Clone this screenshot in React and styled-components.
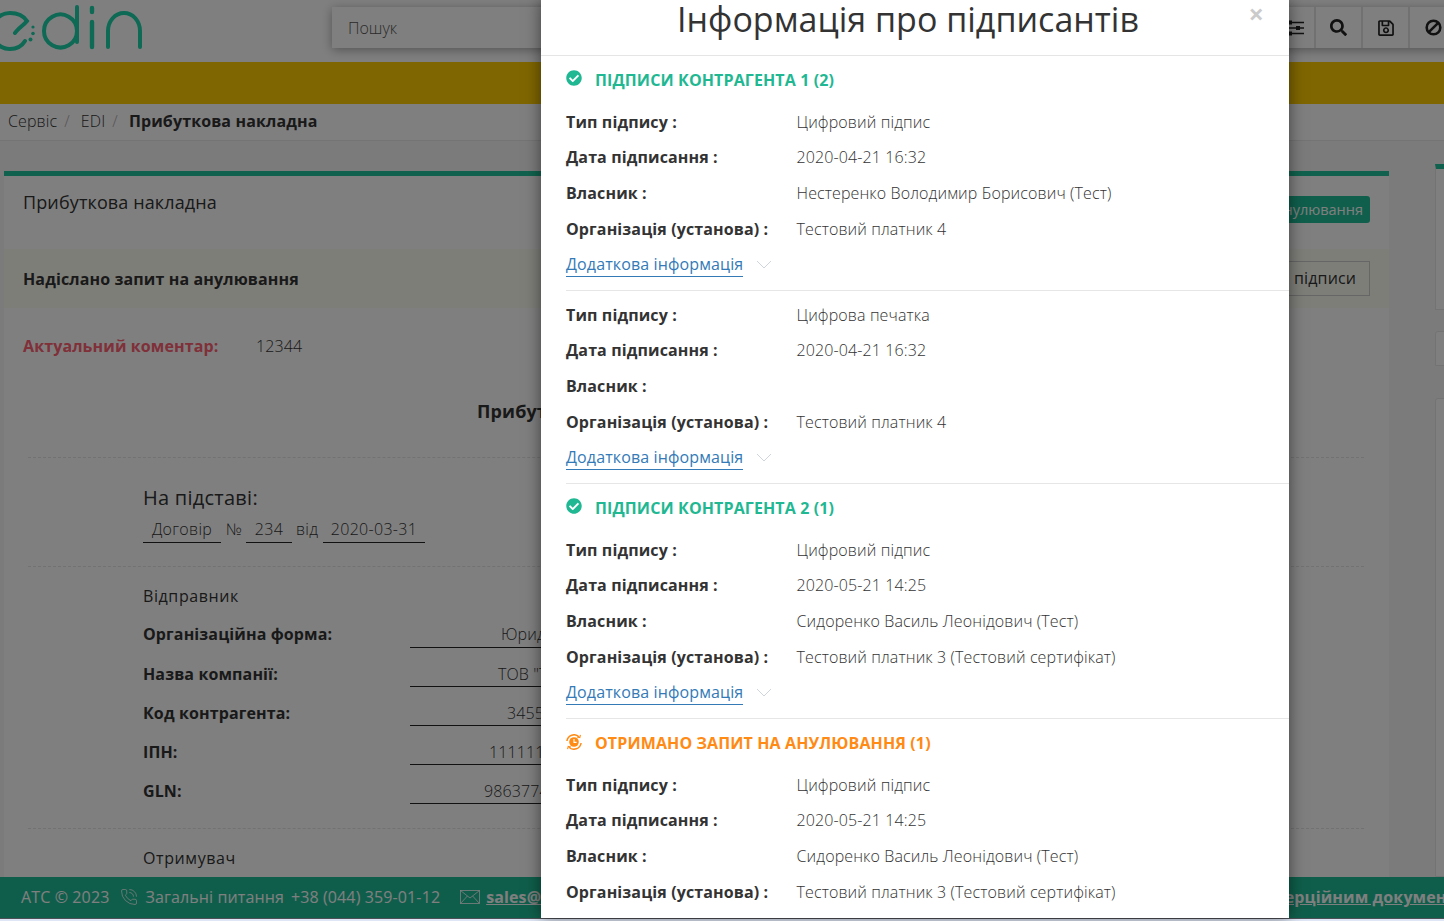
import React from "react";
import styled, { createGlobalStyle } from "styled-components";
import { FaCheckCircle, FaSearch, FaRegSave } from "react-icons/fa";
import { PhoneCall } from "lucide-react";

const Global = createGlobalStyle`
  html, body { margin: 0; padding: 0; }
  body { font-family: "Open Sans", "Liberation Sans", sans-serif; font-size: 16px; color: #333; letter-spacing: 0.12px; }
  * { box-sizing: border-box; }
`;

const Screen = styled.div`
  position: relative;
  width: 1444px;
  height: 921px;
  overflow: hidden;
  background: #dfe7f6;
`;
const Page = styled.div`
  width: 1444px;
  height: 918px;
  display: flex;
  flex-direction: column;
  overflow: hidden;
  background: #fbfbfb;
`;
const Backdrop = styled.div`
  position: absolute;
  left: 0;
  top: 0;
  width: 1444px;
  height: 919px;
  background: rgba(0, 0, 0, 0.5);
  border-bottom: 1px solid rgba(0, 0, 0, 0.3);
`;

/* Header */
const Header = styled.header`
  height: 62px;
  flex: none;
  display: flex;
  background: #fff;
`;
const LogoBox = styled.div`
  width: 332px;
  flex: none;
  height: 62px;
`;
const Toolbar = styled.div`
  flex: none;
  width: 1130px;
  height: 41px;
  margin-top: 7px;
  display: flex;
  background: #fff;
  box-shadow: 0 2px 10px rgba(0, 0, 0, 0.35);
`;
const Search = styled.div`
  flex: none;
  width: 937px;
  padding-left: 16px;
  display: flex;
  align-items: center;
  font-size: 16px;
  font-weight: 300;
  letter-spacing: 0;
  color: #555;
`;
const ToolButton = styled.div`
  flex: none;
  width: 47px;
  height: 41px;
  display: flex;
  align-items: center;
  justify-content: center;
  border-right: 2px solid #e2e2e2;
  color: #222;
  font-size: ${(p) => p.$size || 17}px;
`;

const Warning = styled.div`
  height: 42px;
  flex: none;
  background: #ffcc00;
`;

const Crumbs = styled.nav`
  height: 37px;
  flex: none;
  padding: 0 0 2px 8px;
  display: flex;
  align-items: center;
  font-weight: 300;
  border-bottom: 1px solid #e8e8e8;
  background: #fff;
`;
const CrumbSep = styled.span`
  color: #aaa;
  margin: 0 ${(p) => p.$gap}px 0 7px;
`;
const CrumbNow = styled.b`
  font-weight: 700;
`;

/* Content */
const Content = styled.main`
  flex: 1;
  min-height: 0;
  display: flex;
  background: #f6f6f6;
`;
const Panel = styled.section`
  flex: none;
  width: 1385px;
  margin: 30px 0 0 4px;
  border-top: 5px solid #20c49c;
  background: #fff;
`;
const PanelHead = styled.div`
  height: 73px;
  padding: 16px 19px 0;
  display: flex;
  justify-content: space-between;
  align-items: flex-start;
`;
const PanelTitle = styled.h2`
  margin: 0;
  font-size: 18px;
  font-weight: 400;
  line-height: 20px;
`;
const SolidButton = styled.div`
  height: 27px;
  margin-top: 4px;
  padding: 0 7px;
  border-radius: 3px;
  background: #1fbf98;
  color: #fff;
  font-size: 14.5px;
  letter-spacing: 0;
  line-height: 27px;
`;
const Notice = styled.div`
  height: 59px;
  padding: 0 19px;
  display: flex;
  justify-content: space-between;
  align-items: center;
  background: #fdfdf2;
  font-weight: 700;
`;
const GhostButton = styled.div`
  height: 35px;
  padding: 0 13px;
  border: 1px solid #ccc;
  font-weight: 400;
  line-height: 33px;
`;
const CommentRow = styled.div`
  margin-top: 26px;
  padding-left: 19px;
  display: flex;
  line-height: 24px;
`;
const CommentLabel = styled.span`
  width: 233px;
  font-weight: 700;
  color: #ff6073;
`;
const CommentValue = styled.span`
  font-weight: 300;
`;
const DocTitle = styled.h1`
  margin: 41px 0 0;
  padding-left: 473px;
  font-size: 18px;
  line-height: 24px;
  font-weight: 700;
`;
const Dashed = styled.hr`
  margin: ${(p) => p.$top}px 25px 0 24px;
  border: 0;
  border-top: 1px dashed #e4e4e4;
`;
const Basis = styled.h3`
  margin: 26px 0 0 139px;
  font-size: 20px;
  font-weight: 500;
  letter-spacing: 0.25px;
  line-height: 28px;
`;
const BasisRow = styled.div`
  margin: 5px 0 0 139px;
  display: flex;
  font-weight: 300;
  letter-spacing: 0.3px;
  line-height: 25px;
`;
const BasisField = styled.span`
  width: ${(p) => p.$w}px;
  text-align: center;
  border-bottom: 1px solid #222;
`;
const BasisWord = styled.span`
  width: ${(p) => p.$w}px;
  margin-left: ${(p) => p.$left}px;
`;
const PartyTitle = styled.div`
  margin: ${(p) => p.$top}px 0 0 139px;
  line-height: 24px;
  font-weight: 400;
  letter-spacing: 0.6px;
`;
const PartyRow = styled.div`
  margin: ${(p) => (p.$first ? 14 : 0)}px 0 0 139px;
  height: 39px;
  display: flex;
  align-items: flex-start;
`;
const PartyLabel = styled.span`
  width: 267px;
  padding-top: ${(p) => (p.$first ? 0 : 1)}px;
  font-weight: 700;
  line-height: 24px;
`;
const PartyField = styled.span`
  width: 300px;
  height: 26px;
  padding-top: ${(p) => (p.$first ? 0 : 1)}px;
  padding-left: ${(p) => p.$indent}px;
  border-bottom: 1px solid #222;
  font-weight: 300;
  line-height: 24px;
  white-space: nowrap;
`;

const Aside = styled.aside`
  flex: none;
  width: 30px;
  margin: 23px 0 0 46px;
  display: flex;
  flex-direction: column;
`;
const AsideTop = styled.div`
  height: 146px;
  border: 1px solid #e6e6e6;
  border-top: 5px solid #20c49c;
  background: #fff;
`;
const AsideBox = styled.div`
  height: ${(p) => p.$h}px;
  margin-top: ${(p) => p.$top}px;
  border: 1px solid #e6e6e6;
  border-radius: 3px 0 0 0;
  background: #fff;
`;

/* Footer */
const Footer = styled.footer`
  height: 41px;
  flex: none;
  padding: 0 0 1px 21px;
  display: flex;
  align-items: center;
  background: #1fbd97;
  color: #fff;
  white-space: nowrap;
  font-weight: 400;
`;
const FootIcon = styled.span`
  display: flex;
  flex: none;
  margin: ${(p) => p.$m};
`;
const FootGap = styled.span`
  margin-left: 7px;
`;
const FootLink = styled.a`
  flex: none;
  margin-left: ${(p) => p.$left || 0}px;
  font-weight: 700;
  text-decoration: underline;
  color: #fff;
`;

/* Modal */
const Modal = styled.div`
  position: absolute;
  left: 541px;
  top: 0;
  width: 748px;
  height: 918px;
  overflow: hidden;
  background: #fff;
  box-shadow: 0 0 15px rgba(0, 0, 0, 0.5);
`;
const ModalHead = styled.div`
  height: 56px;
  padding-right: 14px;
  border-bottom: 1px solid #e5e5e5;
  text-align: center;
`;
const ModalTitle = styled.h1`
  margin: 0;
  font-size: 34px;
  font-weight: 400;
  letter-spacing: 0;
  line-height: 38px;
  color: #333;
`;
const Close = styled.span`
  position: absolute;
  right: 25px;
  top: 0;
  font-size: 27px;
  font-weight: 700;
  line-height: 28px;
  color: #000;
  opacity: 0.2;
`;
const SectionTitle = styled.div`
  height: 48px;
  padding-left: 25px;
  display: flex;
  align-items: center;
  font-weight: 700;
  color: ${(p) => p.$color};
`;
const SectionIcon = styled.span`
  width: 29px;
  height: 16px;
  margin-top: ${(p) => p.$lift}px;
  display: flex;
  color: inherit;
`;
const Group = styled.div`
  padding-top: ${(p) => (p.$tail ? 6 : 0)}px;
`;
const InfoRow = styled.div`
  height: 36px;
  padding-left: 25px;
  display: flex;
  align-items: center;
  &:first-child {
    height: 35px;
    padding-top: 1px;
  }
`;
const InfoLabel = styled.span`
  width: 230.5px;
  flex: none;
  font-weight: 700;
  color: #333;
`;
const InfoValue = styled.span`
  font-weight: 300;
  color: #333;
`;
const MoreRow = styled.div`
  height: 35px;
  padding-left: 25px;
  display: flex;
  align-items: center;
`;
const MoreLink = styled.a`
  line-height: 24px;
  border-bottom: 1px solid #337ab7;
  color: #337ab7;
  font-weight: 400;
`;
const Chevron = styled.svg`
  width: 16px;
  height: 9px;
  margin-left: 13px;
  flex: none;
`;
const Divider = styled.hr`
  margin: 8px 0 0 25px;
  border: 0;
  border-top: 1px solid #e6e6e6;
`;

const Logo = () => (
  <svg width="150" height="62" viewBox="0 0 150 62" fill="none" stroke="#1cd2aa" strokeWidth="4" strokeLinecap="round">
    <path d="M15 33 C18 28 24 25 27 21 C23 15 17 13 10 13 C0 13 -8 21 -8 31 C-8 41 0 49 10 49 C17 49 22 46 25 41" />
    <circle cx="33" cy="27" r="1.6" fill="#1cd2aa" stroke="none" />
    <circle cx="33" cy="33.5" r="1.8" fill="#1cd2aa" stroke="none" />
    <circle cx="30.5" cy="39.5" r="2" fill="#1cd2aa" stroke="none" />
    <path d="M77 31 A16.5 16.5 0 1 1 77 30.9 M77 7 V42" />
    <path d="M92 8 V12 M92 22 V47" strokeWidth="4.4" />
    <path d="M108 47 V31 A16 18 0 0 1 140 31 V47" />
  </svg>
);

const Sliders = () => (
  <svg width="20" height="16" viewBox="0 0 20 16" fill="none" stroke="#222" strokeWidth="1.3" style={{ marginLeft: 4 }}>
    <path d="M0 2.5H20M0 8H20M0 13.5H20" />
    <rect x="4" y="0.5" width="4" height="4" fill="#222" stroke="none" />
    <rect x="12" y="6" width="4" height="4" fill="#222" stroke="none" />
    <rect x="4" y="11.5" width="4" height="4" fill="#222" stroke="none" />
  </svg>
);

const BanIcon = () => (
  <svg width="17" height="17" viewBox="0 0 17 17" fill="none" stroke="#222" strokeWidth="2.6" style={{ marginLeft: 2 }}>
    <circle cx="8.5" cy="8.5" r="6.8" />
    <path d="M3.8 13.2L13.2 3.8" />
  </svg>
);

const CancelIcon = () => (
  <svg width="16" height="16" viewBox="0 0 16 16" fill="none" stroke="#ff8a14">
    <circle cx="8" cy="8" r="4.8" fill="#ff8a14" stroke="none" />
    <path d="M8 5V8.4H10.6" stroke="#fff" strokeWidth="1.1" />
    <path d="M0.9 7A7.2 7.2 0 0 1 13 2.8" strokeWidth="1.5" />
    <path d="M15.1 9A7.2 7.2 0 0 1 3 13.2" strokeWidth="1.5" />
    <path d="M14.4 0.8L13.8 3.6L11 3" strokeWidth="1.1" />
    <path d="M1.6 15.2L2.2 12.4L5 13" strokeWidth="1.1" />
  </svg>
);

const Envelope = () => (
  <svg width="20" height="14" viewBox="0 0 20 14" fill="none" stroke="#fff" strokeWidth="0.8">
    <rect x="0.5" y="0.5" width="19" height="13" />
    <path d="M0.5 0.5L10 8L19.5 0.5M0.5 13.5L7.4 6M19.5 13.5L12.6 6" />
  </svg>
);

const More = () => (
  <MoreRow>
    <MoreLink>Додаткова інформація</MoreLink>
    <Chevron viewBox="0 0 16 9" fill="none" stroke="#cfd5de" strokeWidth="1">
      <path d="M1 1L8 8L15 1" />
    </Chevron>
  </MoreRow>
);

const Info = ({ type, date, owner, org, more = true, tail }) => (
  <Group $tail={tail}>
    <div>
      <InfoRow><InfoLabel>Тип підпису :</InfoLabel><InfoValue>{type}</InfoValue></InfoRow>
      <InfoRow><InfoLabel>Дата підписання :</InfoLabel><InfoValue>{date}</InfoValue></InfoRow>
      <InfoRow><InfoLabel>Власник :</InfoLabel><InfoValue>{owner}</InfoValue></InfoRow>
      <InfoRow><InfoLabel>Організація (установа) :</InfoLabel><InfoValue>{org}</InfoValue></InfoRow>
    </div>
    {more && <More />}
    {more && <Divider />}
  </Group>
);

const parties = [
  ["Організаційна форма:", "Юридична особа", 91],
  ["Назва компанії:", 'ТОВ "Тестовий платник"', 88],
  ["Код контрагента:", "34554355", 97],
  ["ІПН:", "1111111111", 79],
  ["GLN:", "9863774000001", 74],
];

export default function App() {
  return (
    <Screen>
      <Global />
      <Page>
        <Header>
          <LogoBox><Logo /></LogoBox>
          <Toolbar>
            <Search>Пошук</Search>
            <ToolButton><Sliders /></ToolButton>
            <ToolButton><FaSearch /></ToolButton>
            <ToolButton $size={18}><FaRegSave /></ToolButton>
            <ToolButton><BanIcon /></ToolButton>
          </Toolbar>
        </Header>
        <Warning />
        <Crumbs>
          Сервіс<CrumbSep $gap={11}>/</CrumbSep>EDI<CrumbSep $gap={11}>/</CrumbSep>
          <CrumbNow>Прибуткова накладна</CrumbNow>
        </Crumbs>
        <Content>
          <Panel>
            <PanelHead>
              <PanelTitle>Прибуткова накладна</PanelTitle>
              <SolidButton>Запит на анулювання</SolidButton>
            </PanelHead>
            <Notice>
              Надіслано запит на анулювання
              <GhostButton>Переглянути підписи</GhostButton>
            </Notice>
            <CommentRow>
              <CommentLabel>Актуальний коментар:</CommentLabel>
              <CommentValue>12344</CommentValue>
            </CommentRow>
            <DocTitle>Прибуткова накладна</DocTitle>
            <Dashed $top={34} />
            <Basis>На підставі:</Basis>
            <BasisRow>
              <BasisField $w={78}>Договір</BasisField>
              <BasisWord $w={20} $left={5}>№</BasisWord>
              <BasisField $w={46}>234</BasisField>
              <BasisWord $w={27} $left={4}>від</BasisWord>
              <BasisField $w={102}>2020-03-31</BasisField>
            </BasisRow>
            <Dashed $top={23} />
            <PartyTitle $top={17}>Відправник</PartyTitle>
            {parties.map(([label, value, indent], i) => (
              <PartyRow key={label} $first={i === 0}>
                <PartyLabel $first={i === 0}>{label}</PartyLabel>
                <PartyField $first={i === 0} $indent={indent}>{value}</PartyField>
              </PartyRow>
            ))}
            <Dashed $top={11} />
            <PartyTitle $top={17}>Отримувач</PartyTitle>
          </Panel>
          <Aside>
            <AsideTop />
            <AsideBox $h={35} $top={21} />
            <AsideBox $h={480} $top={32} />
          </Aside>
        </Content>
        <Footer>
          АТС © 2023
          <FootIcon $m="0 7px 0 11px"><PhoneCall size={18} strokeWidth={1} /></FootIcon>
          Загальні питання<FootGap>+38 (044) 359-01-12</FootGap>
          <FootIcon $m="0 6px 0 20px"><Envelope /></FootIcon>
          <FootLink>sales@edin.ua</FootLink>
          <FootLink $left={623}>По комерційним документам</FootLink>
        </Footer>
      </Page>
      <Backdrop />
      <Modal>
        <ModalHead>
          <ModalTitle>Інформація про підписантів</ModalTitle>
        </ModalHead>
        <Close>×</Close>
        <SectionTitle $color="#1fb892">
          <SectionIcon $lift={-4}><FaCheckCircle size={16} /></SectionIcon>
          ПІДПИСИ КОНТРАГЕНТА 1 (2)
        </SectionTitle>
        <Info type="Цифровий підпис" date="2020-04-21 16:32" owner="Нестеренко Володимир Борисович (Тест)" org="Тестовий платник 4" />
        <Info tail type="Цифрова печатка" date="2020-04-21 16:32" owner="" org="Тестовий платник 4" />
        <SectionTitle $color="#1fb892">
          <SectionIcon $lift={-4}><FaCheckCircle size={16} /></SectionIcon>
          ПІДПИСИ КОНТРАГЕНТА 2 (1)
        </SectionTitle>
        <Info type="Цифровий підпис" date="2020-05-21 14:25" owner="Сидоренко Василь Леонідович (Тест)" org="Тестовий платник 3 (Тестовий сертифікат)" />
        <SectionTitle $color="#ff8a14">
          <SectionIcon $lift={-3}><CancelIcon /></SectionIcon>
          ОТРИМАНО ЗАПИТ НА АНУЛЮВАННЯ (1)
        </SectionTitle>
        <Info more={false} type="Цифровий підпис" date="2020-05-21 14:25" owner="Сидоренко Василь Леонідович (Тест)" org="Тестовий платник 3 (Тестовий сертифікат)" />
      </Modal>
    </Screen>
  );
}
